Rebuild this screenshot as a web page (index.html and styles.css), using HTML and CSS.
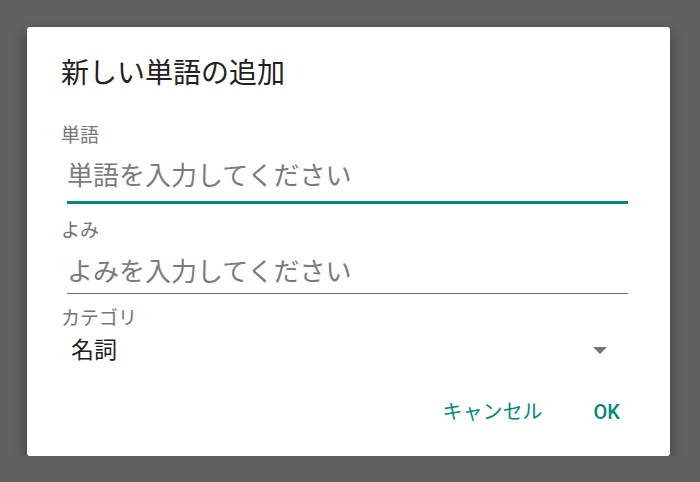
FILE: index.html
```html
<!DOCTYPE html>
<html lang="ja">
  <head>
    <meta charset="UTF-8" />
    <title>新しい単語の追加</title>
    <link rel="stylesheet" href="styles.css">
  </head>
  <body>
    <div class="dialog">
      <h2 class="dialog-title">新しい単語の追加</h2>

      <label class="field-label" for="word">単語</label>
      <input class="field-input focused" type="text" id="word" placeholder="単語を入力してください" />

      <label class="field-label second" for="reading">よみ</label>
      <input class="field-input" type="text" id="reading" placeholder="よみを入力してください" />

      <div class="field-label third">カテゴリ</div>
      <div class="select-row">
        <span class="select-value">名詞</span>
        <span class="select-arrow"></span>
      </div>

      <div class="actions">
        <button type="button" class="text-button">キャンセル</button>
        <button type="button" class="text-button ok">OK</button>
      </div>
    </div>
  </body>
</html>
```

FILE: styles.css
```css
body {
  margin: 0;
  background: #616161;
  font-family: Roboto, "Noto Sans CJK JP", sans-serif;
}

/* khung hộp thoại */
.dialog {
  width: 643px;
  margin: 27px 0 0 27px;
  padding: 33px 41px 34px 34px;
  box-sizing: border-box;
  background: #fff;
  border-radius: 3px;
  box-shadow: 0 6px 14px rgba(0, 0, 0, 0.35);
}

.dialog-title {
  margin: 0;
  font-size: 28px;
  line-height: 28px;
  font-weight: normal;
  color: #212121;
}

/* nhãn của các trường */
.field-label {
  display: block;
  margin-top: 38px;
  font-size: 19px;
  line-height: 19px;
  color: #757575;
}

.field-label.second {
  margin-top: 17px;
}

.field-label.third {
  margin-top: 15px;
}

/* ô nhập */
.field-input {
  display: block;
  box-sizing: content-box;
  width: 561px;
  height: 26px;
  margin: 0 0 0 6px;
  padding: 19px 0 8px;
  border: none;
  border-bottom: 1px solid #707070;
  outline: none;
  font-family: Roboto, "Noto Sans CJK JP", sans-serif;
  font-size: 26px;
  line-height: 26px;
  color: #212121;
  background: transparent;
}

.field-input.focused {
  padding-top: 18px;
  padding-bottom: 12px;
  border-bottom: 3px solid #00897b;
}

.field-input::placeholder {
  color: #7b7b7b;
}

/* ô chọn danh mục */
.select-row {
  display: flex;
  align-items: center;
  justify-content: space-between;
  margin: 11px 22px 0 10px;
}

.select-value {
  font-size: 23px;
  line-height: 23px;
  color: #212121;
}

.select-arrow {
  width: 0;
  height: 0;
  border-left: 7px solid transparent;
  border-right: 7px solid transparent;
  border-top: 7px solid #757575;
}

/* nút bấm */
.actions {
  display: flex;
  justify-content: flex-end;
  gap: 33px;
  margin-top: 40px;
}

.text-button {
  padding: 0 9px;
  border: none;
  background: none;
  font-family: Roboto, "Noto Sans CJK JP", sans-serif;
  font-size: 20px;
  line-height: 20px;
  color: #00897b;
  cursor: pointer;
}

.text-button.ok {
  font-weight: 500;
}
```
